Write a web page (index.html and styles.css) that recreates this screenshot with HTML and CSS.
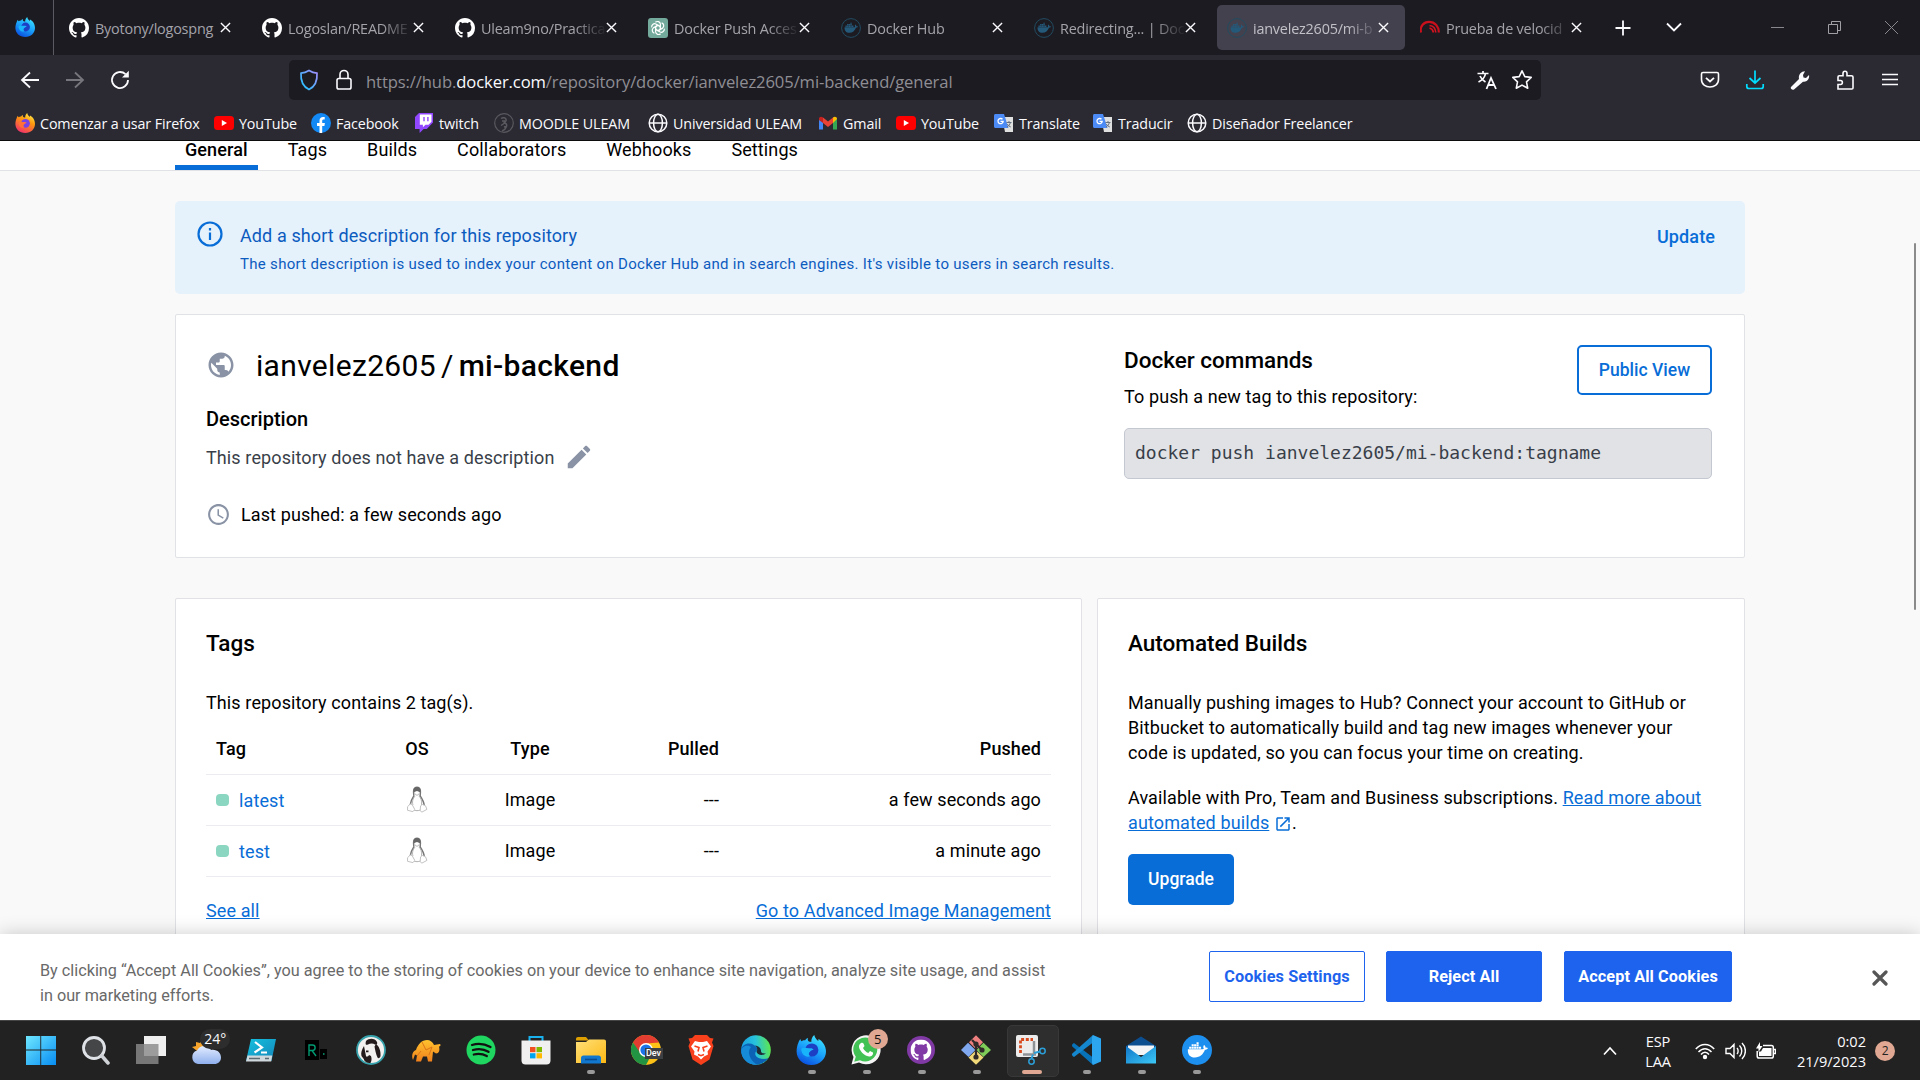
FILE: index.html
```html
<!DOCTYPE html>
<html lang="es">
<head>
<meta charset="utf-8">
<title>ianvelez2605/mi-backend - Docker Hub</title>
<link rel="stylesheet" href="styles.css">
</head>
<body>
<svg class="defs" width="0" height="0" aria-hidden="true">
  <defs>
    <linearGradient id="gFox" x1="0.8" y1="0" x2="0.3" y2="1"><stop offset="0" stop-color="#fff44f"/><stop offset=".4" stop-color="#ff980e"/><stop offset="1" stop-color="#f2306b"/></linearGradient>
    <linearGradient id="gFoxDev" x1="0.8" y1="0" x2="0.3" y2="1"><stop offset="0" stop-color="#3fe8ff"/><stop offset=".5" stop-color="#1ba4fb"/><stop offset="1" stop-color="#0a4fe0"/></linearGradient>
    <linearGradient id="gShield" x1="0" y1="1" x2="1" y2="0"><stop offset="0" stop-color="#17c8ff"/><stop offset="1" stop-color="#a78bff"/></linearGradient>
    <linearGradient id="gWin" x1="0" y1="0" x2="1" y2="1"><stop offset="0" stop-color="#6fe7ff"/><stop offset="1" stop-color="#078df2"/></linearGradient>
    <linearGradient id="gCloud" x1="0" y1="0" x2="0" y2="1"><stop offset="0" stop-color="#e4edff"/><stop offset="1" stop-color="#8fb0ee"/></linearGradient>
    <linearGradient id="gFolder" x1="0" y1="0" x2="1" y2="1"><stop offset="0" stop-color="#ffe07a"/><stop offset="1" stop-color="#fdb913"/></linearGradient>
    <linearGradient id="gEdge" x1="0" y1=".4" x2="1" y2=".3"><stop offset="0" stop-color="#1a9fe4"/><stop offset=".5" stop-color="#28c3dc"/><stop offset="1" stop-color="#5fe84a"/></linearGradient>
    <linearGradient id="gElephant" x1="0" y1="0" x2="0" y2="1"><stop offset="0" stop-color="#ffc22e"/><stop offset="1" stop-color="#f0801c"/></linearGradient>
    <linearGradient id="gMail" x1="0" y1="0" x2="1" y2="1"><stop offset="0" stop-color="#1176c9"/><stop offset="1" stop-color="#3cc8f5"/></linearGradient>
    <linearGradient id="gPs" x1="0" y1="0" x2="1" y2="1"><stop offset="0" stop-color="#14c2e0"/><stop offset="1" stop-color="#1584b8"/></linearGradient>
    <symbol id="foxshape" viewBox="0 0 20 20"><path d="M1.6 5.2c.2-1 .8-1.9 1.4-2.5 0 .7.3 1.2.6 1.5.6-.5 1.6-.8 2.5-.7.4-.7 1.2-1.3 2-1.5-.4.7-.3 1.5.1 2 .5.4 1.4.6 2 .6-.1-1.900.7-3.500 2-4.600.3 1.700 1.300 2.800 2.600 4 .2-.4.2-.9.100-1.400C17.500 3.800 20 6.900 20 11c0 5-4.200 9-9.700 9C4.500 20 .4 16 .4 11c0-2.200.5-4.300 1.200-5.800z"/></symbol>
    <symbol id="firefox" viewBox="0 0 20 20"><use href="#foxshape" fill="url(#gFox)"/><circle cx="10.500" cy="10.300" r="4.400" fill="#7542e5"/><path d="M3.500 9.500c2-1.500 4-.2 5.500-.4 1.300-.2 2.500.3 2.700 1-1 .3-2 .7-2.600 1.500-.8 1-.8 2 .5 2.900-3.200 1.300-6.100-1.500-6.100-5z" fill="#ff7139"/></symbol>
    <symbol id="firefoxdev" viewBox="0 0 20 20"><use href="#foxshape" fill="url(#gFoxDev)"/><circle cx="10.500" cy="10" r="4.400" fill="#1c3fc4"/><path d="M3.500 9.200c2-1.500 4-.2 5.500-.4 1.300-.2 2.500.3 2.700 1-1 .3-2 .7-2.600 1.500-.8 1-.8 2 .5 2.900-3.200 1.300-6.100-1.500-6.100-5z" fill="#19b5fb"/></symbol>
    <symbol id="github" viewBox="0 0 16 16"><path d="M8 0C3.580 0 0 3.580 0 8c0 3.540 2.290 6.530 5.470 7.590.4.070.55-.17.55-.38 0-.19-.01-.82-.01-1.490-2.010.37-2.530-.49-2.690-.94-.09-.23-.48-.94-.82-1.130-.28-.15-.68-.52-.01-.53.63-.01 1.080.58 1.230.82.72 1.210 1.870.87 2.330.66.070-.52.280-.87.510-1.070-1.780-.2-3.640-.89-3.640-3.950 0-.87.310-1.590.82-2.150-.080-.2-.360-1.020.080-2.120 0 0 .67-.21 2.200.82.640-.18 1.320-.27 2-.27s1.360.090 2 .27c1.530-1.040 2.200-.82 2.200-.82.440 1.100.160 1.920.080 2.120.510.560.82 1.270.82 2.150 0 3.070-1.870 3.750-3.650 3.950.290.250.540.73.540 1.480 0 1.070-.010 1.930-.010 2.200 0 .210.150.460.550.380A8.010 8.010 0 0 0 16 8c0-4.420-3.580-8-8-8z"/></symbol>
    <symbol id="whale" viewBox="0 0 24 18"><path d="M1 8h16.500c.8 0 1.500-.2 1.700-.5-.9-1.300-.7-3 .3-4.200 1.200.8 1.700 1.800 1.700 3 1-.2 2.200 0 2.800.5-.6 1.400-1.900 2-3.500 2C18.500 14 15 17.500 9 17.500 3.500 17.500.5 14 1 8zM2.500 5.200h2.400v2.300H2.500zM5.300 5.200h2.400v2.300H5.300zM8.100 5.200h2.400v2.300H8.100zM10.900 5.200h2.400v2.300h-2.400zM13.700 5.200h2.400v2.300h-2.400zM5.300 2.500h2.400v2.300H5.300zM8.100 2.500h2.400v2.300H8.100zM10.900 2.500h2.400v2.300h-2.400zM10.900 0h2.400v2.100h-2.400z"/></symbol>
    <symbol id="dockerfav" viewBox="0 0 20 20"><circle cx="10" cy="10" r="9.400" fill="none" stroke="#224c61" stroke-width="1"/><use href="#whale" x="3" y="4.500" width="14" height="10.500" fill="#24597a"/></symbol>
    <symbol id="gpt" viewBox="0 0 20 20"><rect width="20" height="20" rx="3" fill="#74aa9c"/><g fill="none" stroke="#fff" stroke-width="1.200"><path d="M10 7.300 7.600 8.700v5.200a3 3 0 0 0 5 1.800"/><path d="M10 7.300 7.600 8.700v5.200a3 3 0 0 0 5 1.800" transform="rotate(60 10 10)"/><path d="M10 7.300 7.600 8.700v5.200a3 3 0 0 0 5 1.800" transform="rotate(120 10 10)"/><path d="M10 7.300 7.600 8.700v5.200a3 3 0 0 0 5 1.800" transform="rotate(180 10 10)"/><path d="M10 7.300 7.600 8.700v5.200a3 3 0 0 0 5 1.800" transform="rotate(240 10 10)"/><path d="M10 7.300 7.600 8.700v5.200a3 3 0 0 0 5 1.800" transform="rotate(300 10 10)"/></g></symbol>
    <symbol id="speed" viewBox="0 0 20 20"><path d="M1 14.500C-.4 8 4 3.800 9 3.800c6 0 10 4.700 9.800 10.700" fill="none" stroke="#c9101c" stroke-width="2.200"/><path d="M9.500 7.500c3.500.4 6 3 6.300 7M9.500 10c2.500.6 3.500 2 4 4.500" fill="none" stroke="#d8121f" stroke-width="1.600"/></symbol>
    <symbol id="x" viewBox="0 0 12 12"><path d="M1 1l10 10M11 1 1 11" fill="none" stroke="currentColor" stroke-width="1.500"/></symbol>
    <symbol id="youtube" viewBox="0 0 20 20"><rect y="3" width="20" height="14" rx="3.500" fill="#f00"/><path d="M7.800 7v6l5.200-3z" fill="#fff"/></symbol>
    <symbol id="facebook" viewBox="0 0 20 20"><circle cx="10" cy="10" r="10" fill="#1289f5"/><path d="M8.500 20v-7H6v-3h2.500V7.800C8.500 5.200 10 4 12 4c.8 0 1.700.1 1.700.1v2.500h-1c-1.100 0-1.500.6-1.500 1.400V10h2.700l-.5 3h-2.200v7z" fill="#fff"/></symbol>
    <symbol id="twitch" viewBox="0 0 20 20"><path d="M5 0 1 4v12h4.600v4l4-4h3.200L19 9.500V0z" fill="#9146ff"/><path d="M5.800 1.500h11.700v7.300l-3 3h-3l-2.600 2.500v-2.500H5.800z" fill="#fff"/><path d="M9.300 4h1.400v4.300H9.300zM13.200 4h1.400v4.300h-1.400z" fill="#9146ff"/></symbol>
    <symbol id="moodle" viewBox="0 0 20 20"><circle cx="10" cy="10" r="9.300" fill="none" stroke="#59585e" stroke-width="1.200"/><path d="M7 5.500c2-1.500 5-1 5.200 1.500.1 1.800-2 1.800-2.200 3 2 0 3.200 1.500 2.500 3.500S9.500 17.500 8 18M8 8h3M7 12.500l3-2M10 14l3-1" fill="none" stroke="#5b5a60" stroke-width="1.500"/></symbol>
    <symbol id="web" viewBox="0 0 20 20"><g fill="none" stroke="#fbfbfe" stroke-width="1.500"><circle cx="10" cy="10" r="8.800"/><ellipse cx="10" cy="10" rx="4.400" ry="8.800"/><path d="M1.200 10h17.600"/></g></symbol>
    <symbol id="gmail" viewBox="0 0 20 20"><path d="M1 5v11.500h4V9z" fill="#4285f4"/><path d="M15 9v7.500h4V5z" fill="#34a853"/><path d="M5 4.500 10 8.500l5-4V10l-5 4-5-4z" fill="#ea4335"/><path d="M15 4.500c1.500-1.300 4-1 4 1.500l-4 4z" fill="#fbbc04"/><path d="M1 6c0-2.500 2.500-2.800 4-1.500V10L1 7z" fill="#c5221f"/></symbol>
    <symbol id="gtrans" viewBox="0 0 20 20"><path d="M8 4h11v15H11z" fill="#e0e0e0"/><path d="M1.500 1h8.500l4.500 14H1.500C.6 15 0 14.400 0 13.500v-11C0 1.600.6 1 1.500 1z" fill="#4c8bf5"/><path d="M8.500 6.300A2.600 2.600 0 1 0 9.200 8.300H6.500" fill="none" stroke="#fff" stroke-width="1.300"/><path d="M12.500 9.500h5M15 8v1.500m-2 4.500c2-1.200 3-2.500 3.300-4.500m-3 1.500c.7 1.500 2 2.500 3.500 3" fill="none" stroke="#68717f" stroke-width="1"/></symbol>
    <symbol id="tux" viewBox="0 0 24 30"><path d="M8.500 11C8 7 7.500 1.500 12 1.500S16 7 15.500 11c2 3 4.200 6.500 4.500 10.500M4.500 21C5 17 6.500 14 8.500 11" fill="none" stroke="#777" stroke-width="1.700"/><path d="M8.200 5C8 2.500 9.500 1 12 1s4 1.500 3.800 4.200L15.500 7 12 5.500 8.300 7z" fill="#666"/><path d="M9.500 8.500 12 10.500l2.500-2" fill="none" stroke="#aaa"/><path d="M7.500 21C6 16.500 8.500 12.500 10 11m4 0c2 2 3.800 5 3 10M8 26.500c2.500 1.200 5.500 1.200 8 0" fill="none" stroke="#aaa"/><path d="M4.500 20 1.500 23v4l6 1.500 2-2.500-3-5.500zM18 20.500l3.500 1.500 1.500 4-5.500 3-2-1.500.5-5.500z" fill="#fff" stroke="#bbb"/></symbol>
  </defs>
</svg>

<header class="browser">
  <div class="tabbar">
    <div class="pin"><svg class="i20"><use href="#firefoxdev"/></svg></div>
    <div class="tabs">
      <div class="tab"><svg class="i20 white"><use href="#github"/></svg><span>Byotony/logospng</span><svg class="tx"><use href="#x"/></svg></div>
      <div class="tab"><svg class="i20 white"><use href="#github"/></svg><span>Logoslan/README</span><svg class="tx"><use href="#x"/></svg></div>
      <div class="tab"><svg class="i20 white"><use href="#github"/></svg><span>Uleam9no/Practica</span><svg class="tx"><use href="#x"/></svg></div>
      <div class="tab"><svg class="i20"><use href="#gpt"/></svg><span>Docker Push Acces</span><svg class="tx"><use href="#x"/></svg></div>
      <div class="tab"><svg class="i20"><use href="#dockerfav"/></svg><span>Docker Hub</span><svg class="tx"><use href="#x"/></svg></div>
      <div class="tab"><svg class="i20"><use href="#dockerfav"/></svg><span>Redirecting... | Doc</span><svg class="tx"><use href="#x"/></svg></div>
      <div class="tab active"><svg class="i20"><use href="#dockerfav"/></svg><span>ianvelez2605/mi-b</span><svg class="tx"><use href="#x"/></svg></div>
      <div class="tab"><svg class="i20"><use href="#speed"/></svg><span>Prueba de velocid</span><svg class="tx"><use href="#x"/></svg></div>
    </div>
    <div class="tabtools">
      <svg width="16" height="16" viewBox="0 0 16 16"><path d="M8 .5v15M.5 8h15" stroke="#fbfbfe" stroke-width="1.800"/></svg>
      <svg width="16" height="16" viewBox="0 0 16 16"><path d="m1 3.500 7 7 7-7" fill="none" stroke="#fbfbfe" stroke-width="1.800"/></svg>
    </div>
    <div class="wincontrols">
      <svg width="13" height="13" viewBox="0 0 13 13"><path d="M0 6.500h13" stroke="#88878c"/></svg>
      <svg width="13" height="13" viewBox="0 0 13 13"><path d="M.5 3.500h9v9h-9zM3.500 3.500v-3h9v9h-3" fill="none" stroke="#a0a0a4"/></svg>
      <svg width="13" height="13" viewBox="0 0 13 13"><path d="m0 0 13 13M13 0 0 13" stroke="#88878c"/></svg>
    </div>
  </div>

  <div class="toolbar">
    <div class="navbtns">
      <svg width="20" height="20" viewBox="0 0 20 20"><path d="M19 10H2m8-7.500L2 10l8 7.500" fill="none" stroke="#fbfbfe" stroke-width="1.800"/></svg>
      <svg width="20" height="20" viewBox="0 0 20 20"><path d="M1 10h17m-8-7.500 8 7.500-8 7.500" fill="none" stroke="#77767c" stroke-width="1.800"/></svg>
      <svg width="20" height="20" viewBox="0 0 20 20"><path d="M15.500 4.200A8 8 0 1 0 18 10" fill="none" stroke="#fbfbfe" stroke-width="1.800"/><path d="M18.800.8v6.700H12z" fill="#fbfbfe"/></svg>
    </div>
    <div class="urlbar">
      <svg width="20" height="22" viewBox="0 0 20 22"><path d="M10 1.500c2.500 1.600 5 2.500 8 2.700C18.500 12 16 17.500 10 20.500 4 17.500 1.500 12 2 4.200c3-.2 5.500-1.100 8-2.700z" fill="none" stroke="url(#gShield)" stroke-width="1.700"/></svg>
      <svg class="lock" width="18" height="22" viewBox="0 0 18 22"><rect x="2" y="9.500" width="14" height="10.500" rx="1.800" fill="none" stroke="#fbfbfe" stroke-width="1.600"/><path d="M5 9.500V5.500a4 4 0 0 1 8 0v4" fill="none" stroke="#fbfbfe" stroke-width="1.600"/></svg>
      <span class="url">https://hub.<b>docker.com</b>/repository/docker/ianvelez2605/mi-backend/general</span>
      <svg width="22" height="22" viewBox="0 0 22 22"><path d="M1.500 4.500h11M7 2v2.500M2.500 13c4-2 6.500-5 7-8.500M4 7c1 2.500 3 4.500 5.500 6" fill="none" stroke="#fbfbfe" stroke-width="1.700"/><path d="m10.500 20 4.500-11 5 11m-8-4h6.500" fill="none" stroke="#fbfbfe" stroke-width="1.800"/></svg>
      <svg width="22" height="22" viewBox="0 0 22 22"><path d="m11 1.800 2.800 5.800 6.400.8-4.700 4.400 1.200 6.400-5.700-3.100-5.700 3.100 1.200-6.400L1.800 8.400l6.400-.8z" fill="none" stroke="#fbfbfe" stroke-width="1.600" stroke-linejoin="round"/></svg>
    </div>
    <div class="exts">
      <svg width="20" height="20" viewBox="0 0 20 20"><path d="M3 2.500h14c1 0 1.500.6 1.500 1.500v5.500c0 10-17 10-17 0V4c0-.9.500-1.500 1.500-1.500z" fill="none" stroke="#fbfbfe" stroke-width="1.600"/><path d="m6 7.800 4 3.700 4-3.700" fill="none" stroke="#fbfbfe" stroke-width="1.800"/></svg>
      <svg width="20" height="20" viewBox="0 0 20 20"><path d="M10 .5v12M4.500 8 10 13l5.500-5M1.800 14v2.500c0 1.500.7 2 2 2h12.400c1.300 0 2-.5 2-2V14" fill="none" stroke="#00ddff" stroke-width="1.700"/></svg>
      <svg width="20" height="20" viewBox="0 0 20 20"><path d="M1 17 9 9c-.8-3.500 1.500-7.500 6-7.700L13 5l.5 2.500L16 8l3-3c.8 4-2 7.500-6 6.700L4 19.500C2 20.500 0 18.500 1 17z" fill="#fbfbfe"/></svg>
      <svg width="20" height="20" viewBox="0 0 20 20"><path d="M3 19V14.500h2.500c2.500 0 2.500-4 0-4H3V7c0-.8.400-1.200 1.200-1.200H8V3.500c0-3 4-3 4 0v2.300h4.500c.8 0 1.500.5 1.500 1.200v11c0 .7-.5 1-1.200 1z" fill="none" stroke="#fbfbfe" stroke-width="1.600"/></svg>
      <svg width="20" height="20" viewBox="0 0 20 20"><path d="M2 4.500h16M2 9.500h16M2 14.500h16" stroke="#fbfbfe" stroke-width="1.600"/></svg>
    </div>
  </div>

  <nav class="bookmarks">
    <span><svg class="i20"><use href="#firefox"/></svg>Comenzar a usar Firefox</span>
    <span><svg class="i20"><use href="#youtube"/></svg>YouTube</span>
    <span><svg class="i20"><use href="#facebook"/></svg>Facebook</span>
    <span><svg class="i20"><use href="#twitch"/></svg>twitch</span>
    <span><svg class="i20"><use href="#moodle"/></svg>MOODLE ULEAM</span>
    <span><svg class="i20"><use href="#web"/></svg>Universidad ULEAM</span>
    <span><svg class="i20"><use href="#gmail"/></svg>Gmail</span>
    <span><svg class="i20"><use href="#youtube"/></svg>YouTube</span>
    <span><svg class="i20"><use href="#gtrans"/></svg>Translate</span>
    <span><svg class="i20"><use href="#gtrans"/></svg>Traducir</span>
    <span><svg class="i20"><use href="#web"/></svg>Diseñador Freelancer</span>
  </nav>
</header>

<div class="page">
  <nav class="repo-nav">
    <a class="current">General</a><a>Tags</a><a>Builds</a><a>Collaborators</a><a>Webhooks</a><a>Settings</a>
  </nav>

  <main class="content">
    <section class="alert">
      <svg width="26" height="26" viewBox="0 0 26 26"><circle cx="13" cy="13" r="11.500" fill="none" stroke="#086dd7" stroke-width="2.200"/><path d="M13 11.500V19M13 7v2.500" stroke="#086dd7" stroke-width="2.200"/></svg>
      <div class="alert-text">
        <h2>Add a short description for this repository</h2>
        <p>The short description is used to index your content on Docker Hub and in search engines. It's visible to users in search results.</p>
      </div>
      <a class="update">Update</a>
    </section>

    <section class="card repo">
      <div class="repo-info">
        <h1><svg width="30" height="30" viewBox="0 0 24 24"><path fill="#8993a5" d="M12 2C6.480 2 2 6.480 2 12s4.480 10 10 10 10-4.480 10-10S17.520 2 12 2zm-1 17.930c-3.950-.49-7-3.850-7-7.930 0-.62.080-1.210.21-1.790L9 15v1c0 1.100.9 2 2 2v1.930zm6.900-2.540c-.26-.81-1-1.390-1.900-1.390h-1v-3c0-.55-.45-1-1-1H8v-2h2c.55 0 1-.45 1-1V7h2c1.100 0 2-.9 2-2v-.41c2.930 1.190 5 4.060 5 7.410 0 2.080-.8 3.970-2.100 5.390z"/></svg><span class="owner">ianvelez2605</span><span class="slash">/</span><strong>mi-backend</strong></h1>
        <h3>Description</h3>
        <p class="desc">This repository does not have a description<svg width="30" height="30" viewBox="0 0 24 24"><path fill="#8993a5" d="M3 17.250V21h3.750L17.810 9.940l-3.750-3.750L3 17.250zM20.710 7.040c.39-.39.39-1.020 0-1.410l-2.340-2.340c-.39-.39-1.020-.39-1.410 0l-1.830 1.830 3.750 3.750 1.830-1.830z"/></svg></p>
        <p class="pushed"><svg width="25" height="25" viewBox="0 0 24 24"><path fill="#8993a5" d="M11.990 2C6.470 2 2 6.480 2 12s4.470 10 9.990 10C17.520 22 22 17.520 22 12S17.520 2 11.990 2zM12 20c-4.420 0-8-3.580-8-8s3.580-8 8-8 8 3.580 8 8-3.580 8-8 8zm.5-13H11v6l5.250 3.150.75-1.230-4.500-2.670z"/></svg>Last pushed: a few seconds ago</p>
      </div>
      <div class="commands">
        <div class="commands-head">
          <div><h2>Docker commands</h2><p>To push a new tag to this repository:</p></div>
          <button class="outline">Public View</button>
        </div>
        <pre>docker push ianvelez2605/mi-backend:tagname</pre>
      </div>
    </section>

    <div class="columns">
      <section class="card tags">
        <h2>Tags</h2>
        <p>This repository contains 2 tag(s).</p>
        <table>
          <thead><tr><th class="c1">Tag</th><th class="c2">OS</th><th class="c3">Type</th><th class="c4">Pulled</th><th class="c5">Pushed</th></tr></thead>
          <tbody>
            <tr><td><span class="tagname"><i></i>latest</span></td><td class="c2"><svg width="24" height="27"><use href="#tux"/></svg></td><td class="c3">Image</td><td class="c4">---</td><td class="c5">a few seconds ago</td></tr>
            <tr><td><span class="tagname"><i></i>test</span></td><td class="c2"><svg width="24" height="27"><use href="#tux"/></svg></td><td class="c3">Image</td><td class="c4">---</td><td class="c5">a minute ago</td></tr>
          </tbody>
        </table>
        <div class="links"><a>See all</a><a>Go to Advanced Image Management</a></div>
      </section>
      <section class="card builds">
        <h2>Automated Builds</h2>
        <p>Manually pushing images to Hub? Connect your account to GitHub or<br>Bitbucket to automatically build and tag new images whenever your<br>code is updated, so you can focus your time on creating.</p>
        <p class="avail">Available with Pro, Team and Business subscriptions. <a>Read more about</a><br><a>automated builds</a> <svg width="18" height="18" viewBox="0 0 24 24"><path fill="#086dd7" d="M19 19H5V5h7V3H5c-1.110 0-2 .9-2 2v14c0 1.100.89 2 2 2h14c1.100 0 2-.9 2-2v-7h-2v7zM14 3v2h3.590l-9.830 9.830 1.410 1.410L19 6.410V10h2V3h-7z"/></svg>.</p>
        <button class="solid">Upgrade</button>
      </section>
    </div>
  </main>

  <div class="scrollthumb"></div>

  <aside class="cookies">
    <p>By clicking “Accept All Cookies”, you agree to the storing of cookies on your device to enhance site navigation, analyze site usage, and assist<br>in our marketing efforts.</p>
    <div class="cookie-actions">
      <button class="ghost">Cookies Settings</button>
      <button>Reject All</button>
      <button class="wide">Accept All Cookies</button>
    </div>
    <svg class="cookie-close" width="16" height="16" viewBox="0 0 16 16"><path d="m2 2 12 12M14 2 2 14" stroke="#565656" stroke-width="3.200" stroke-linecap="round"/></svg>
  </aside>
</div>

<footer class="taskbar">
  <div class="apps">
    <div class="app"><svg viewBox="0 0 30 30"><path fill="url(#gWin)" d="M0 1h14.300v13.500H0zM15.200 1H30v13.500H15.200zM0 15.500h14.300V30H0zM15.200 15.500H30V30H15.200z"/></svg></div>
    <div class="app"><svg viewBox="0 0 30 30"><circle cx="13" cy="13" r="10.500" fill="#454647" stroke="#dfe2e6" stroke-width="2.800"/><path d="m20.500 20.500 6.500 7.500" stroke="#cfd2d6" stroke-width="3.500" stroke-linecap="round"/></svg></div>
    <div class="app"><svg viewBox="0 0 30 30"><path d="M8 1h22v20H8z" fill="#efefef"/><path d="M0 9h22.500v20H0z" fill="#8a8a8a" opacity=".82"/></svg></div>
    <div class="app weather"><svg viewBox="0 0 30 30"><path d="m1 12 4-1 0-4 4 1 3-4 2 5 4 2-8 8z" fill="#f4a32b"/><path d="M7 29a7 7 0 0 1-1-13.500C8 10 17 9 20 15c6-1 10 3 10 7.500 0 4-3 6.500-6.500 6.500z" fill="url(#gCloud)"/></svg><b>24°</b></div>
    <div class="app"><svg viewBox="0 0 30 30"><path d="M5 4h25l-4.500 22H0z" fill="url(#gPs)"/><path d="M1.500 20.500h24.800L25.200 26.500H0z" fill="#cfd8dc"/><path d="m9 7 7 5.500-7.500 5M15 17.500h6" fill="none" stroke="#fff" stroke-width="2.200"/><path d="M3 23.500h11M19 23.500h4" stroke="#5b6b74" stroke-width="1.300"/></svg></div>
    <div class="app"><svg viewBox="0 0 30 30"><path d="M4 5h14v20H4zM19 14h7v10h-7z" fill="#000"/><path d="M8 21V10h3.500c3.500 0 3.500 5.500 0 5.500H8m3 0 4 5.500" fill="none" stroke="#009a72" stroke-width="1.400"/><path d="M22 18h1.500v2H22z" fill="#087a5d"/></svg></div>
    <div class="app"><svg viewBox="0 0 30 30"><circle cx="15" cy="15" r="14" fill="#f3f1ef" stroke="#37a2ac" stroke-width="1.800"/><path d="M10 6c3-3 9-3 11 1 .8 2-.5 3-2 2.500-2-1.500-5-1.200-7 0-2 1-3 0-2-3.500zM20 9c3 2 5 7 4.500 12-.4 2-2 3-3 1.500-1.500-3-2.500-8-3-11zM8 11c-2 3-3.500 7-2.500 10l3 4c1 0 1.500-2 1.500-4z" fill="#241c1c"/><path d="M10 15.500h2.500v1.800H10zM8 20c2 2 4 2 5 0l2 1c1 3 .5 5-.5 7-3 .5-5-1-6.500-3z" fill="#241c1c"/></svg></div>
    <div class="app"><svg viewBox="0 0 30 30"><path d="M2 25c-2-5 0-9 3-10 2-6 6-10 11-10 3 0 6 2 7 5l6-1c1 1 .5 2.500-1 2.500 1 4 0 7-3 7l-3-2-1 10h-4l-1-5h-4l-2 5H5l1-6-2-1z" fill="url(#gElephant)"/><path d="m11 7 4 8 6-3-3 8m-8-4-4 5" fill="none" stroke="#dc7417" stroke-width="1"/></svg></div>
    <div class="app"><svg viewBox="0 0 30 30"><circle cx="15" cy="15" r="14.500" fill="#1fd760"/><path d="M6 10c6-2 13-1 18.500 2M7 15c5-1.500 11-1 15.500 1.800M7.800 19.500c4.500-1.200 9-.7 13 1.600" fill="none" stroke="#111" stroke-width="2.300" stroke-linecap="round"/></svg></div>
    <div class="app"><svg viewBox="0 0 30 30"><path d="M8.500 7V2h13v5" fill="none" stroke="#19b2ee" stroke-width="2"/><path d="M.5 5.500h29V26a4 4 0 0 1-4 3.500h-21A4 4 0 0 1 .5 26z" fill="#f0f0f0"/><path d="M9 12h5.500v5.200H9z" fill="#f25022"/><path d="M15.500 12H21v5.200h-5.500z" fill="#7fba00"/><path d="M9 18.200h5.500v5.200H9z" fill="#00a4ef"/><path d="M15.500 18.200H21v5.200h-5.500z" fill="#ffb900"/></svg></div>
    <div class="app run"><svg viewBox="0 0 30 30"><path d="M0 4c0-1.200.8-2 2-2h8l3 3.500H0z" fill="#dd9f00"/><path d="M0 7h10l3-2.500h15c1.200 0 2 .8 2 2V28H0z" fill="url(#gFolder)"/><path d="M5 28.500V23c0-1.500 1-2.500 2.500-2.500h15c1.500 0 2.500 1 2.500 2.500v5.500z" fill="#1278ce"/><path d="M9 24.500h12" stroke="#0a4c92" stroke-width="1.600"/></svg></div>
    <div class="app"><svg viewBox="0 0 30 30"><circle cx="15" cy="15" r="15" fill="#fbc116"/><path d="M2 7.500A15 15 0 0 1 28 7.500L15 8.500l-6.500 10z" fill="#e23d30"/><path d="M2 7.500A15 15 0 0 0 15 30l6-11.500-12-1z" fill="#229342"/><circle cx="15" cy="15" r="7" fill="#fff"/><circle cx="15" cy="15" r="5.600" fill="#1a73e8"/></svg><em class="devtag">Dev</em></div>
    <div class="app"><svg viewBox="0 0 30 30"><path d="m9 0-3 3-3.500.500L4 7.500 2.500 11l4 13.500L15 30l8.500-5.500 4-13.500L26 7.500l1.500-4L24 3l-3-3z" fill="#f8411c"/><path d="m9 6 4 1h4l4-1 4 5.500-3.500 5 .5 3-4 2-3 3-3-3-4-2 .5-3L5 11.500z" fill="#fff"/><path d="m8.500 11 4.500 1.500-1 4M21.500 11 17 12.500l1 4M12 19.500l3 1.200 3-1.200" fill="none" stroke="#f8411c" stroke-width="1.600"/></svg></div>
    <div class="app"><svg viewBox="0 0 30 30"><circle cx="15" cy="15" r="14.800" fill="url(#gEdge)"/><path d="M.2 15C1 9 8 7 13 10c3 2 4 4 2.500 6-1.500 1-2.500 5 2 7 4 1.500 7.500 1 10 0A15 15 0 0 1 .2 15z" fill="#0c63b5"/><path d="M.2 15C2 10 7 10 10 12c-4 4-2 13 6 17.800C6 30 0 23 .2 15z" fill="#168bd8"/><path d="M15.500 16.500c1.500-2 .5-4.500-1.500-6 4 .5 6 3 6 5.500-.2 1.300 2 3 5 2.500-3.500 2.500-9 1.500-9.500-2z" fill="#1f2a33"/></svg></div>
    <div class="app run"><svg><use href="#firefoxdev"/></svg></div>
    <div class="app run"><svg viewBox="0 0 30 30"><path d="M.5 29.500 2.500 22A14.500 14.500 0 1 1 8 27.500z" fill="#f5f5f5"/><path d="m3.200 26.800 1.600-5A12 12 0 1 1 9 25.200z" fill="#42c254"/><path d="M10 8c1-.6 2-.5 2.500.6l1 2.300-1.500 2c1.300 2.500 3 4 5.300 5l1.700-1.900 3 1.500c.5 2.500-1.600 4-4 4C13 21 8 15 8 11.500c0-1.500.8-2.700 2-3.500z" fill="#fff"/></svg><b class="count">5</b></div>
    <div class="app run"><svg viewBox="0 0 30 30"><circle cx="15" cy="15" r="14" fill="#813aa5"/><use href="#github" x="4.500" y="4.500" width="21" height="21" fill="#fff"/></svg></div>
    <div class="app run"><svg viewBox="0 0 30 30"><path d="m15 .2 7 7-7 7-7-7z" fill="#ef8080"/><path d="m7 7.800 7.500 7.200L7.500 22 0 15z" fill="#80a8ef"/><path d="m22.500 7.800 7.500 7.200-7.500 7-7-7z" fill="#80cc58"/><path d="m15 15.500 7.500 7-7.500 7.200-7.500-7.200z" fill="#f1d878"/><path d="m11 5 4 4v14m0-14 6 6" fill="none" stroke="#302b29" stroke-width="2.200"/><circle cx="15" cy="9" r="2.600" fill="#302b29"/><circle cx="21" cy="15" r="2.600" fill="#302b29"/><circle cx="15" cy="22" r="2.600" fill="#302b29"/></svg></div>
    <div class="app run selected"><svg viewBox="0 0 30 30"><rect width="22" height="22" rx="2" fill="#ececec"/><path d="M4.500 18V4.500H17" fill="none" stroke="#d84a1d" stroke-width="2.800" stroke-dasharray="3 1.700"/><path d="M18 6v13.500M7 19.500h13" stroke="#8e9296" stroke-width="2.500"/><path d="m17 19.500-1.500 4M18 18l6-1.500" stroke="#2c9fd8" stroke-width="2"/><circle cx="26.500" cy="16" r="2.700" fill="none" stroke="#2c9fd8" stroke-width="1.500"/><circle cx="15.500" cy="26.500" r="2.700" fill="none" stroke="#2c9fd8" stroke-width="1.500"/></svg></div>
    <div class="app run"><svg viewBox="0 0 30 30"><path d="M1.500 9 3 8l19 14.500V30L.8 11z" fill="#0872b9"/><path d="M1.500 21 3 22 22 7.500V0L.8 19z" fill="#1587cf"/><path d="m22 0 8 3.500v23L22 30l-1-2V2z" fill="#2ca6ef"/></svg></div>
    <div class="app run"><svg viewBox="0 0 30 30"><path d="M0 11 15 1.500 30 11v6H0z" fill="#0c4f91"/><path d="M2 10.500h26V20H2z" fill="#f2f4f5"/><path d="M0 11 15 22 30 11v17.500H0z" fill="url(#gMail)"/></svg></div>
    <div class="app run"><svg viewBox="0 0 30 30"><circle cx="15" cy="15" r="15" fill="#1d8fee"/><use href="#whale" x="5" y="7" width="21" height="16" fill="#fff"/></svg></div>
  </div>
  <div class="tray">
    <svg class="up" width="14" height="10" viewBox="0 0 14 10"><path d="m1 8.500 6-6.500 6 6.500" fill="none" stroke="#fff" stroke-width="1.700"/></svg>
    <div class="lang">ESP<br>LAA</div>
    <svg width="20" height="18" viewBox="0 0 20 18"><g fill="none" stroke="#fff" stroke-width="1.500"><path d="M.8 7C6 1 14 1 19.200 7M3.500 10c4-4.500 9-4.500 13 0M6 12.500c2.300-3 5.700-3 8 0"/></g><circle cx="10" cy="15" r="2.200" fill="#fff"/></svg>
    <svg width="21" height="18" viewBox="0 0 21 18"><g fill="none" stroke="#fff" stroke-width="1.400"><path d="M1 6.500h4L9 2.500v13l-4-4H1zM12 6c1.500 1.500 1.500 4.500 0 6M14.500 3.500c3 3 3 8 0 11M17 1c4.500 4.500 4.500 11.500 0 16"/></g></svg>
    <svg width="20" height="18" viewBox="0 0 20 18"><path d="M7 3.500h8.500c1 0 1.800.8 1.800 1.800v9c0 1-.8 1.800-1.800 1.800H3c-1 0-1.800-.8-1.800-1.800V9M17.500 7.500h2v4h-2" fill="none" stroke="#fff" stroke-width="1.500"/><path d="M7 6h8.500v8H3V9.500h2zM4 0 0 6.500h2.500V10L6.500 4H4z" fill="#fff"/></svg>
    <div class="clock">0:02<br>21/9/2023</div>
    <b class="notif">2</b>
  </div>
</footer>
</body>
</html>
```
FILE: styles.css
```css
* { box-sizing: border-box; margin: 0; padding: 0; }
body {
  width: 1920px; height: 1080px; overflow: hidden;
  display: flex; flex-direction: column;
  font-family: Roboto, "Liberation Sans", sans-serif;
  font-size: 18px; line-height: 25px; letter-spacing: .11px; color: #000; background: #f9f9fa;
}
svg { display: block; flex: none; }
.defs { position: absolute; }
.i20 { width: 20px; height: 20px; }
.white { fill: #fff; }

/* Browser chrome */
.browser, .taskbar { font-family: "Open Sans", "Noto Sans", sans-serif; color: #fbfbfe; letter-spacing: 0; }
.browser { height: 141px; flex: none; background: #2b2a33; border-bottom: 1px solid #0c0c0d; }
.tabbar { display: flex; height: 55px; background: #1c1b22; }
.pin { width: 54px; border-right: 1px solid #5b5a62; padding: 17px 0 0 15px; }
.tabs { display: flex; gap: 5px; padding: 5px 0 5px 5px; }
.tab { width: 188px; height: 45px; padding: 0 12px 0 10px; display: flex; align-items: center; gap: 6px; border-radius: 5px; color: #a4a3aa; }
.tab span {
  width: 127px; flex: none; white-space: nowrap; font-size: 14.4px; letter-spacing: -.2px; margin-right: -8px; padding-top: 1px;
  -webkit-mask-image: linear-gradient(90deg, #000 74%, transparent 99%); mask-image: linear-gradient(90deg, #000 74%, transparent 99%);
}
.tab:first-child span { -webkit-mask-image: none; mask-image: none; }
.tab.active { background: #42414d; color: #c2c1c8; }
.tx { width: 11px; height: 11px; color: #fbfbfe; }
.tabtools { display: flex; gap: 35px; align-items: center; padding-left: 17px; }
.wincontrols { display: flex; gap: 44px; align-items: center; margin-left: auto; padding-right: 22px; }
.toolbar { display: flex; height: 50px; padding: 5px 20px 5px; }
.navbtns { display: flex; gap: 25px; width: 269px; align-items: center; }
.urlbar { width: 1252px; height: 40px; background: #1c1b22; border-radius: 5px; display: flex; align-items: center; padding: 0 8px 0 10px; }
.lock { margin-left: 16px; }
.url { flex: 1; margin: 3px 0 0 13px; font-size: 16.6px; letter-spacing: -.1px; color: #8f8e94; white-space: nowrap; }
.url b { font-weight: 400; color: #fbfbfe; }
.urlbar svg:last-child { margin-left: 13px; }
.exts { display: flex; gap: 25px; margin-left: auto; align-items: center; }
.bookmarks {
  display: grid; height: 35px; padding: 1px 0 0 15px; align-items: center; font-size: 14.3px; white-space: nowrap; letter-spacing: -.12px;
  grid-template-columns: 199px 97px 103px 80px 154px 170px 78px 98px 99px 94px 200px;
}
.bookmarks span { display: flex; gap: 5px; align-items: center; }

/* Web page */
.page { position: relative; flex: 1; overflow: hidden; background: #f9f9f9; }
.repo-nav { display: flex; height: 30px; background: #fff; border-bottom: 1px solid #e1e2e6; padding-left: 175px; gap: 20px; }
.repo-nav a { padding: 0 10px; height: 29px; line-height: 17px; }
.repo-nav .current { font-weight: 500; border-bottom: 5px solid #086dd7; }
.content { width: 1570px; margin: 30px 0 0 175px; }
h1, h2, h3, p { font-weight: 400; }
a { color: inherit; }
.alert { height: 93px; background: #e5f1fb; border-radius: 5px; display: flex; padding: 20px 30px 0 22px; color: #0c5bbf; }
.alert-text { flex: 1; padding: 2px 0 0 17px; }
.alert h2 { font-size: 18px; line-height: 26px; }
.alert p { font-size: 15px; line-height: 22px; margin-top: 4px; letter-spacing: .305px; }
.update { font-weight: 500; color: #086dd7; padding-top: 3px; }
.card { background: #fff; border: 1px solid #e1e2e6; border-radius: 2px; }
.card h2 { font-size: 22.5px; line-height: 30px; font-weight: 500; letter-spacing: 0; }
.repo { height: 244px; margin-top: 20px; padding: 30px 32px 0 30px; display: flex; justify-content: space-between; }
.repo h1 { display: flex; align-items: center; height: 40px; font-size: 30px; letter-spacing: .33px; }
.repo h1 svg { margin-right: 20px; }
.slash { margin: 0 5px 0 5px; }
.repo h1 strong { font-weight: 500; }
.repo h3 { font-size: 20px; font-weight: 500; margin-top: 22px; letter-spacing: 0; }
.desc { display: flex; align-items: center; gap: 10px; height: 30px; margin-top: 10px; color: #393f49; }
.pushed { display: flex; align-items: center; gap: 10px; margin-top: 30px; }
.commands { width: 588px; }
.commands-head { display: flex; justify-content: space-between; height: 83px; }
.commands-head p { margin-top: 9px; }
button { font: 500 17.5px/25px Roboto, sans-serif; border-radius: 5px; }
.outline { width: 135px; height: 50px; padding-top: 1px; border: 2px solid #086dd7; background: #fff; color: #086dd7; }
pre { height: 51px; background: #e1e2e6; border: 1px solid #c4c8d1; border-radius: 5px; padding: 11px 10px; font: 18px/25px "DejaVu Sans Mono", "Liberation Mono", monospace; letter-spacing: 0; color: #393f49; }
.columns { display: flex; gap: 15px; margin-top: 40px; }
.columns .card { height: 380px; padding: 29px 30px 0; }
.tags { width: 907px; }
.builds { width: 648px; }
.columns h2 + p { margin-top: 32px; }
table { width: 845px; table-layout: fixed; border-collapse: collapse; margin-top: 8px; }
tr { border-bottom: 1px solid #ebecef; height: 51px; }
th { font-weight: 500; text-align: left; }
th, td { padding: 0 10px; }
.c1 { width: 154px; }
.c2 { width: 114px; text-align: center; }
.c2 svg { margin: auto; }
.c3 { width: 112px; text-align: center; }
.c4 { width: 143px; text-align: right; }
.c5 { text-align: right; }
.tagname { display: flex; align-items: center; gap: 10px; color: #086dd7; padding-top: 1px; }
.tagname i { width: 13px; height: 12px; border-radius: 4px; background: #8bd6c0; }
.links { display: flex; justify-content: space-between; margin-top: 21px; }
.links a, .builds a { color: #086dd7; text-decoration: underline; }
.builds .avail { margin-top: 20px; }
.avail svg { display: inline-block; vertical-align: -4px; }
.solid { width: 106px; height: 51px; margin-top: 19px; border: 0; background: #086dd7; color: #fff; }
.scrollthumb { position: absolute; left: 1914px; top: 102px; width: 2px; height: 367px; border-radius: 2px; background: #8b8b8b; }

/* Cookie banner */
.cookies { position: absolute; left: 0; right: 0; bottom: 0; height: 86px; background: #fff; box-shadow: 0 0 18px rgba(0,0,0,.2); display: flex; padding-left: 40px; letter-spacing: 0; }
.cookies p { width: 1169px; padding-top: 24px; font-size: 16.23px; color: #696969; }
.cookie-actions { display: flex; gap: 21px; padding-top: 17px; }
.cookie-actions button { width: 156px; height: 51px; border: 1px solid #1d63ed; border-radius: 2px; background: #1d63ed; color: #fff; font-size: 16.25px; font-weight: 700; letter-spacing: .1px; white-space: nowrap; }
.cookie-actions .ghost { background: #fff; color: #1d63ed; }
.cookie-actions .wide { width: 168px; margin-left: 1px; }
.cookie-close { margin: 36px 0 0 140px; }

/* Windows taskbar */
.taskbar { height: 60px; flex: none; background: #222; border-top: 1px solid #454545; display: flex; justify-content: space-between; }
.apps { display: flex; padding-left: 13px; }
.app { position: relative; width: 55.05px; height: 59px; padding-top: 14px; display: flex; justify-content: center; }
.app > svg { width: 30px; height: 30px; }
.run::after { content: ""; position: absolute; left: 24px; top: 49px; width: 8px; height: 4px; border-radius: 2px; background: #999; }
.selected::before { content: ""; position: absolute; left: 3px; top: 4px; width: 50px; height: 50px; border-radius: 5px; background: #2e2e2e; border: 1px solid #383838; }
.selected svg { position: relative; }
.selected::after { left: 18px; width: 20px; background: #e0a892; }
.weather b { position: absolute; left: 22px; top: 8px; width: 30px; height: 20px; border-radius: 10px; background: #2d2d2d; font-size: 14px; font-weight: 400; line-height: 20px; text-align: center; }
.devtag { position: absolute; left: 26px; top: 27px; width: 18px; height: 11px; background: #3c4043; color: #fff; font: 500 9px/11px Roboto, sans-serif; text-align: center; }
.count { position: absolute; left: 29px; top: 8px; width: 20px; height: 20px; border-radius: 50%; background: #e0a892; color: #111; font-size: 13px; font-weight: 400; line-height: 20px; text-align: center; }
.tray { display: flex; align-items: center; padding-right: 25px; font-size: 14.6px; line-height: 20px; letter-spacing: -.2px; }
.up { margin-right: 27px; }
.lang { width: 28px; text-align: center; margin-right: 23px; }
.tray svg + svg { margin-left: 10px; }
.clock { width: 80px; margin-left: 10px; text-align: right; letter-spacing: 0; }
.notif { width: 20px; height: 20px; margin-left: 9px; border-radius: 50%; background: #e0a892; color: #222; font-size: 12px; font-weight: 400; text-align: center; }
```
